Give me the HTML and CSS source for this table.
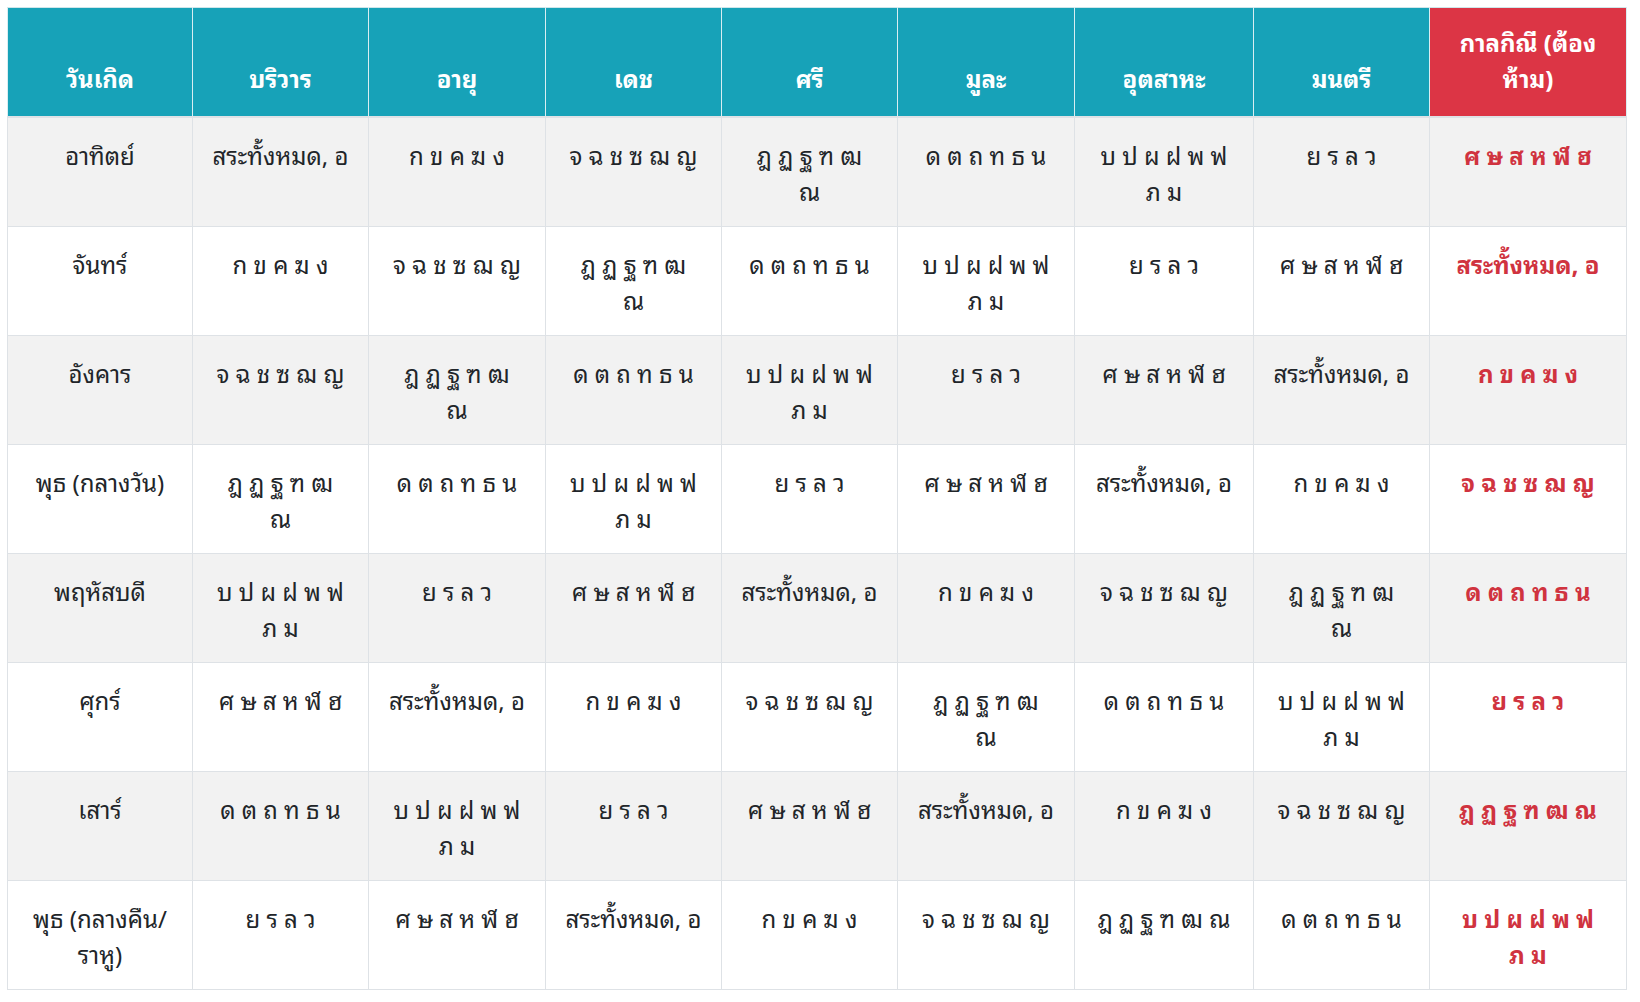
FILE: index.html
```html
<!DOCTYPE html>
<html lang="th">
<head>
<meta charset="utf-8">
<title>ตารางทักษา</title>
<link rel="stylesheet" href="styles.css">
</head>
<body>
<table class="taksa">
  <colgroup>
    <col class="c-day"><col class="c-a"><col class="c-b"><col class="c-a"><col class="c-a"><col class="c-b"><col class="c-w"><col class="c-a"><col class="c-kala">
  </colgroup>
  <thead>
    <tr>
      <th>วันเกิด</th>
      <th>บริวาร</th>
      <th>อายุ</th>
      <th>เดช</th>
      <th>ศรี</th>
      <th>มูละ</th>
      <th>อุตสาหะ</th>
      <th>มนตรี</th>
      <th class="kala">กาลกิณี (ต้อง<br>ห้าม)</th>
    </tr>
  </thead>
  <tbody>
    <tr>
      <td>อาทิตย์</td>
      <td>สระทั้งหมด, อ</td>
      <td>ก ข ค ฆ ง</td>
      <td>จ ฉ ช ซ ฌ ญ</td>
      <td>ฎ ฏ ฐ ฑ ฒ<br>ณ</td>
      <td>ด ต ถ ท ธ น</td>
      <td>บ ป ผ ฝ พ ฟ<br>ภ ม</td>
      <td>ย ร ล ว</td>
      <td class="kala">ศ ษ ส ห ฬ ฮ</td>
    </tr>
    <tr>
      <td>จันทร์</td>
      <td>ก ข ค ฆ ง</td>
      <td>จ ฉ ช ซ ฌ ญ</td>
      <td>ฎ ฏ ฐ ฑ ฒ<br>ณ</td>
      <td>ด ต ถ ท ธ น</td>
      <td>บ ป ผ ฝ พ ฟ<br>ภ ม</td>
      <td>ย ร ล ว</td>
      <td>ศ ษ ส ห ฬ ฮ</td>
      <td class="kala">สระทั้งหมด, อ</td>
    </tr>
    <tr>
      <td>อังคาร</td>
      <td>จ ฉ ช ซ ฌ ญ</td>
      <td>ฎ ฏ ฐ ฑ ฒ<br>ณ</td>
      <td>ด ต ถ ท ธ น</td>
      <td>บ ป ผ ฝ พ ฟ<br>ภ ม</td>
      <td>ย ร ล ว</td>
      <td>ศ ษ ส ห ฬ ฮ</td>
      <td>สระทั้งหมด, อ</td>
      <td class="kala">ก ข ค ฆ ง</td>
    </tr>
    <tr>
      <td>พุธ (กลางวัน)</td>
      <td>ฎ ฏ ฐ ฑ ฒ<br>ณ</td>
      <td>ด ต ถ ท ธ น</td>
      <td>บ ป ผ ฝ พ ฟ<br>ภ ม</td>
      <td>ย ร ล ว</td>
      <td>ศ ษ ส ห ฬ ฮ</td>
      <td>สระทั้งหมด, อ</td>
      <td>ก ข ค ฆ ง</td>
      <td class="kala">จ ฉ ช ซ ฌ ญ</td>
    </tr>
    <tr>
      <td>พฤหัสบดี</td>
      <td>บ ป ผ ฝ พ ฟ<br>ภ ม</td>
      <td>ย ร ล ว</td>
      <td>ศ ษ ส ห ฬ ฮ</td>
      <td>สระทั้งหมด, อ</td>
      <td>ก ข ค ฆ ง</td>
      <td>จ ฉ ช ซ ฌ ญ</td>
      <td>ฎ ฏ ฐ ฑ ฒ<br>ณ</td>
      <td class="kala">ด ต ถ ท ธ น</td>
    </tr>
    <tr>
      <td>ศุกร์</td>
      <td>ศ ษ ส ห ฬ ฮ</td>
      <td>สระทั้งหมด, อ</td>
      <td>ก ข ค ฆ ง</td>
      <td>จ ฉ ช ซ ฌ ญ</td>
      <td>ฎ ฏ ฐ ฑ ฒ<br>ณ</td>
      <td>ด ต ถ ท ธ น</td>
      <td>บ ป ผ ฝ พ ฟ<br>ภ ม</td>
      <td class="kala">ย ร ล ว</td>
    </tr>
    <tr>
      <td>เสาร์</td>
      <td>ด ต ถ ท ธ น</td>
      <td>บ ป ผ ฝ พ ฟ<br>ภ ม</td>
      <td>ย ร ล ว</td>
      <td>ศ ษ ส ห ฬ ฮ</td>
      <td>สระทั้งหมด, อ</td>
      <td>ก ข ค ฆ ง</td>
      <td>จ ฉ ช ซ ฌ ญ</td>
      <td class="kala">ฎ ฏ ฐ ฑ ฒ ณ</td>
    </tr>
    <tr>
      <td>พุธ (กลางคืน/<br>ราหู)</td>
      <td>ย ร ล ว</td>
      <td>ศ ษ ส ห ฬ ฮ</td>
      <td>สระทั้งหมด, อ</td>
      <td>ก ข ค ฆ ง</td>
      <td>จ ฉ ช ซ ฌ ญ</td>
      <td>ฎ ฏ ฐ ฑ ฒ ณ</td>
      <td>ด ต ถ ท ธ น</td>
      <td class="kala">บ ป ผ ฝ พ ฟ<br>ภ ม</td>
    </tr>
  </tbody>
</table>
</body>
</html>
```

FILE: styles.css
```css
html, body {
  margin: 0;
  padding: 0;
  background: #ffffff;
}

body {
  padding: 7px 7px;
  font-family: Tahoma, "Leelawadee UI", "Noto Sans Thai Looped", "Waree", "Loma", "Garuda", "Sarabun", "Noto Sans Thai", "Noto Sans", "DejaVu Sans", sans-serif;
  color: #212529;
}

.taksa {
  width: 1619px;
  border-collapse: collapse;
  table-layout: fixed;
  font-size: 24px;
  line-height: 36px;
}

.c-day { width: 185px; }
.c-a { width: 176px; }
.c-b { width: 177px; }
.c-w { width: 179px; }
.c-kala { width: 197px; }

.taksa th,
.taksa td {
  text-align: center;
  white-space: nowrap;
  border: 1px solid #dee2e6;
}

.taksa th {
  background: #17a2b8;
  color: #ffffff;
  font-weight: 700;
  vertical-align: bottom;
  padding: 15px 6px 21px;
  border-color: #d9eef2;
  border-top-color: #cfe6ea;
  border-bottom: 2px solid #dee2e6;
}

.taksa th.kala {
  background: #dc3545;
}

.taksa td {
  vertical-align: top;
  padding: 18px 6px 18px;
  height: 72px;
}

.taksa tbody tr:nth-child(odd) td {
  background: #f2f2f2;
}

.taksa td.kala {
  color: #d0333f;
  font-weight: 700;
}
```
